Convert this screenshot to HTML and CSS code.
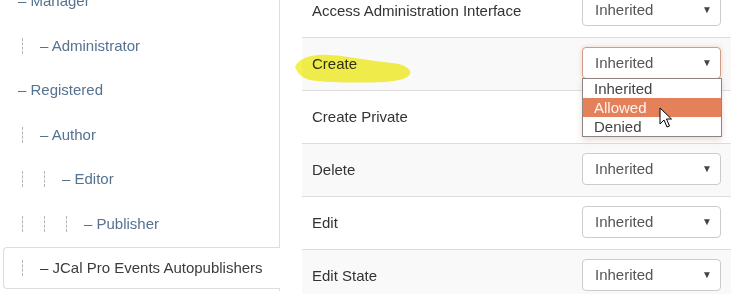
FILE: index.html
```html
<!DOCTYPE html>
<html><head>
<meta charset="utf-8">
<title>Permissions</title>
<link rel="stylesheet" href="styles.css">
</head>
<body>
<div class="page">
	<ul class="groups">
		<li class="group"><span class="name">&ndash; Manager</span></li>
		<li class="group"><span class="guide"></span><span class="name">&ndash; Administrator</span></li>
		<li class="group"><span class="name">&ndash; Registered</span></li>
		<li class="group"><span class="guide"></span><span class="name">&ndash; Author</span></li>
		<li class="group"><span class="guide"></span><span class="guide"></span><span class="name">&ndash; Editor</span></li>
		<li class="group"><span class="guide"></span><span class="guide"></span><span class="guide"></span><span class="name">&ndash; Publisher</span></li>
		<li class="group active"><span class="guide"></span><span class="name">&ndash; JCal Pro Events Autopublishers</span></li>
	</ul>
	<div class="rules">
		<div class="rule">
			<span class="label">Access Administration Interface</span>
			<div class="select">Inherited<span class="caret">&#9660;</span></div>
		</div>
		<div class="rule odd">
			<span class="label">Create</span>
			<div class="select focus">Inherited<span class="caret">&#9660;</span>
				<ul class="options">
					<li>Inherited</li>
					<li class="hover">Allowed</li>
					<li>Denied</li>
				</ul>
			</div>
		</div>
		<div class="rule">
			<span class="label">Create Private</span>
			<div class="select">Inherited<span class="caret">&#9660;</span></div>
		</div>
		<div class="rule odd">
			<span class="label">Delete</span>
			<div class="select">Inherited<span class="caret">&#9660;</span></div>
		</div>
		<div class="rule">
			<span class="label">Edit</span>
			<div class="select">Inherited<span class="caret">&#9660;</span></div>
		</div>
		<div class="rule odd">
			<span class="label">Edit State</span>
			<div class="select">Inherited<span class="caret">&#9660;</span></div>
		</div>
	</div>
</div>
<!-- marker stroke and mouse pointer from the screenshot -->
<svg class="marker" width="731" height="294" viewBox="0 0 731 294">
	<path d="M295,67 C299,58 311,54 330,55 C350,56 368,61 392,63 C404,64 412,69 410,74 C407,79 398,81 385,82 C360,83 330,83 310,80 C301,78 297,72 295,67 Z" fill="#f3f03a" opacity="0.9"/>
</svg>
<svg class="pointer" width="14" height="22" viewBox="0 0 14 22">
	<path d="M1,1 L1,17 L5,13 L8,20 L10.5,19 L7.5,12 L12.5,12 Z" fill="#fff" stroke="#000" stroke-width="1" stroke-linejoin="round"/>
</svg>
</body>
</html>
```

FILE: styles.css
```css
body {
    margin: 0;
    font-family: "Liberation Sans", Arial, sans-serif;
    font-size: 15px;
    color: #333;
    background: #fff;
    overflow: hidden;
}
.page {
    display: flex;
    align-items: flex-start;
    gap: 22px;
}

/* group tree on the left */
.groups {
    list-style: none;
    margin: -21px 0 0 0;
    padding: 0;
    width: 279px;
    flex: none;
    border-right: 1px solid #ddd;
}
.group {
    padding: 12.25px 0 12.25px 18px;
    line-height: 20px;
    white-space: nowrap;
    color: #55728f;
}
.group .guide {
    display: inline-block;
    width: 17px;
    height: 16px;
    margin-left: 4px;
    border-left: 1px dashed #b9b4ac;
    vertical-align: -3px;
}
.group.active {
    margin: 1.25px -1px 1.25px 3px;
    padding: 10px 0 10px 14px;
    border: 1px solid #ddd;
    border-right: none;
    border-radius: 4px 0 0 4px;
    background: #fff;
    color: #3c3c3c;
}

/* permission rows */
.rules {
    flex: 1;
    margin-top: -15px;
}
.rule {
    display: flex;
    align-items: center;
    justify-content: space-between;
    padding: 9px 10px 11px 10px;
    border-bottom: 1px solid #ddd;
}
.rule.odd { background: #f9f9f9; }
.select {
    position: relative;
    box-sizing: border-box;
    width: 139px;
    height: 32px;
    padding: 0 12px;
    line-height: 30px;
    border: 1px solid #ccc;
    border-radius: 4px;
    background: #fff;
    color: #555;
}
.select .caret {
    position: absolute;
    right: 8px;
    top: 0;
    font-size: 10px;
    color: #444;
}
.select.focus {
    border-color: #cf9b84;
    box-shadow: 0 0 5px rgba(210, 140, 110, .35);
}
.options {
    list-style: none;
    position: absolute;
    left: -1px;
    top: 30px;
    z-index: 5;
    width: 138px;
    margin: 0;
    padding: 0;
    border: 1px solid #8f8580;
    background: #fff;
    box-shadow: 0 3px 6px rgba(160, 110, 90, .25);
    line-height: 19px;
    color: #444;
}
.options li { padding-left: 11px; height: 19px; }
.options .hover { background: #e4805a; color: #fdf3ee; }

/* annotations drawn over the screenshot */
.marker {
    position: absolute;
    left: 0;
    top: 0;
    mix-blend-mode: multiply;
    pointer-events: none;
}
.pointer {
    position: absolute;
    left: 659px;
    top: 107px;
    z-index: 10;
}
```
